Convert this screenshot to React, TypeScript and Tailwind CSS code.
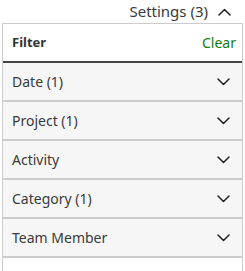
import React from "react";

const rows = ["Date (1)", "Project (1)", "Activity", "Category (1)", "Team Member"];

function Chevron({ up = false }: { up?: boolean }) {
  return (
    <svg width="13" height="8" viewBox="0 0 13 8" fill="none" className="shrink-0">
      <path
        d={up ? "M1 7 L6.5 1.5 L12 7" : "M1 1 L6.5 6.5 L12 1"}
        stroke="#222"
        strokeWidth="1.5"
        strokeLinecap="round"
        strokeLinejoin="round"
      />
    </svg>
  );
}

export default function App() {
  return (
    <div className="h-[271px] w-[245px] overflow-hidden bg-white font-['Noto_Sans',sans-serif] text-[#333]">
      {/* top toggle */}
      <div className="flex h-[23px] items-center justify-end gap-[10px] pr-[14px]">
        <span className="text-[15px] leading-none text-[#3a3a3a]">Settings (3)</span>
        <Chevron up />
      </div>

      {/* panel */}
      <div className="ml-[2px] flex h-[248px] w-[241px] flex-col border border-b-0 border-[#cccccc]">
        <div className="flex h-[37px] shrink-0 items-center justify-between pl-[9px] pr-[6px]">
          <span className="text-[13px] font-bold text-[#333]">Filter</span>
          <span className="text-[14px] text-[#107c10]">Clear</span>
        </div>
        <div className="h-[2px] shrink-0 bg-[#444]" />
        {rows.map((r) => (
          <div
            key={r}
            className="flex h-[39px] shrink-0 items-center justify-between border-b-2 border-[#cccccc] bg-[#f6f6f6] pl-[9px] pr-[12px]"
          >
            <span className="text-[14px] text-[#3a3a3a]">{r}</span>
            <Chevron />
          </div>
        ))}
      </div>
    </div>
  );
}
